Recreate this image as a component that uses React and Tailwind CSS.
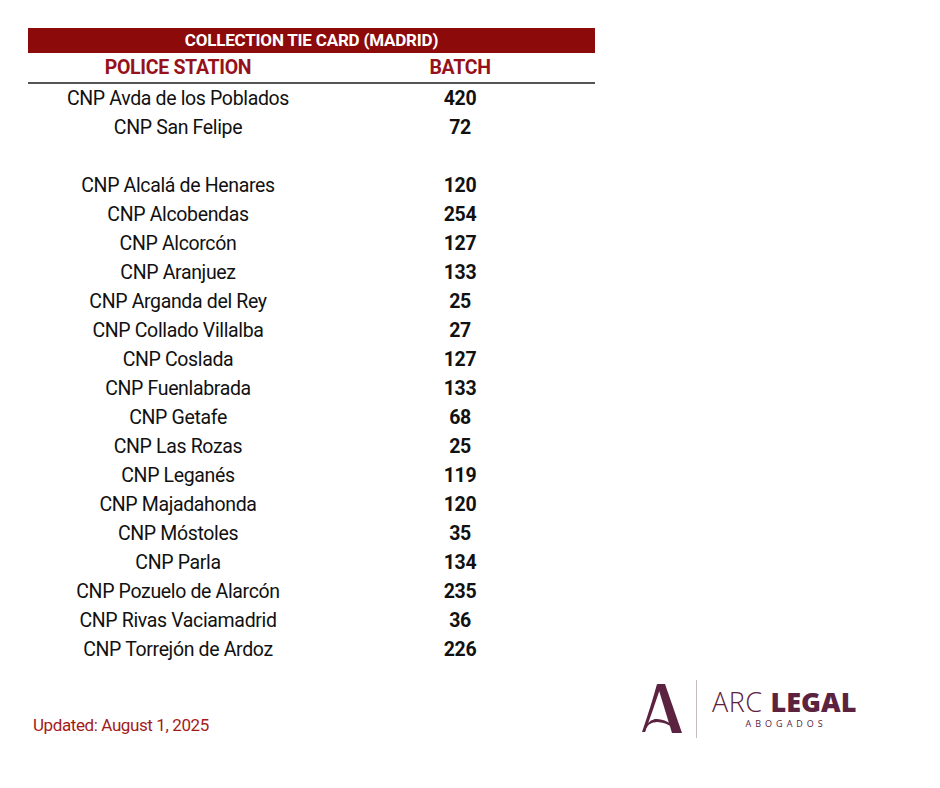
import React from "react";

const stations = [
  ["CNP Avda de los Poblados", "420"],
  ["CNP San Felipe", "72"],
  null,
  ["CNP Alcalá de Henares", "120"],
  ["CNP Alcobendas", "254"],
  ["CNP Alcorcón", "127"],
  ["CNP Aranjuez", "133"],
  ["CNP Arganda del Rey", "25"],
  ["CNP Collado Villalba", "27"],
  ["CNP Coslada", "127"],
  ["CNP Fuenlabrada", "133"],
  ["CNP Getafe", "68"],
  ["CNP Las Rozas", "25"],
  ["CNP Leganés", "119"],
  ["CNP Majadahonda", "120"],
  ["CNP Móstoles", "35"],
  ["CNP Parla", "134"],
  ["CNP Pozuelo de Alarcón", "235"],
  ["CNP Rivas Vaciamadrid", "36"],
  ["CNP Torrejón de Ardoz", "226"],
];

const ArcMark = () => (
  <svg width="42" height="50" viewBox="0 0 42 50">
    {/* right thick leg */}
    <path d="M16 0 L24 0 L41 49 L31 49 Z" fill="#5b2340" />
    {/* left thin leg */}
    <path d="M16 0 Q10 22 1 48 L4 48 Q12 26 19 5 Z" fill="#5b2340" />
    {/* swoosh */}
    <path d="M4 48 Q6 38 16 38 Q24 38 33 44 L32 41 Q22 34 14 35 Q5 37 3 48 Z" fill="#5b2340" />
  </svg>
);

export default function App() {
  return (
    <div className="w-[940px] h-[788px] bg-white relative font-['Roboto',sans-serif]">
      <div className="pt-[28px] pl-[28px]">
        <div className="w-[567px]">
          <div className="h-[25px] bg-[#8c0a0a] text-white font-bold text-[17px] tracking-[-0.2px] flex items-center justify-center">
            COLLECTION TIE CARD (MADRID)
          </div>
          <div className="flex h-[31px] pt-[1px] items-center text-[#96121a] font-bold text-[19.5px] tracking-[-0.3px] border-b-2 border-[#555]">
            <div className="w-[300px] text-center">POLICE STATION</div>
            <div className="w-[264px] text-center">BATCH</div>
          </div>
          <div className="text-[19.5px] text-[#111] tracking-[-0.35px]">
            {stations.map((s, i) =>
              s ? (
                <div key={i} className="flex h-[29px] items-center">
                  <div className="w-[300px] text-center">{s[0]}</div>
                  <div className="w-[264px] text-center font-bold">{s[1]}</div>
                </div>
              ) : (
                <div key={i} className="h-[29px]" />
              )
            )}
          </div>
        </div>
      </div>

      <div className="absolute left-[33px] top-[713px] text-[17px] text-[#a31b1b] tracking-[-0.4px]">
        Updated: August 1, 2025
      </div>

      <div className="absolute left-[641px] top-[680px] flex items-center">
        <ArcMark />
        <div className="w-px h-[58px] bg-[#c9b8bf] ml-[13px] mr-[15px]" />
        <div className="flex flex-col items-center text-[#5b2340]">
          <div className="flex items-baseline text-[27px] leading-[22px] font-['Open_Sans',sans-serif]">
            <span className="font-light tracking-[0.5px]">ARC</span>
            <span className="font-extrabold ml-[8px] tracking-[0px]">LEGAL</span>
          </div>
          <div className="text-[9px] leading-none tracking-[4px] mt-[6px] ml-[4px] font-['Open_Sans',sans-serif]">
            ABOGADOS
          </div>
        </div>
      </div>
    </div>
  );
}
